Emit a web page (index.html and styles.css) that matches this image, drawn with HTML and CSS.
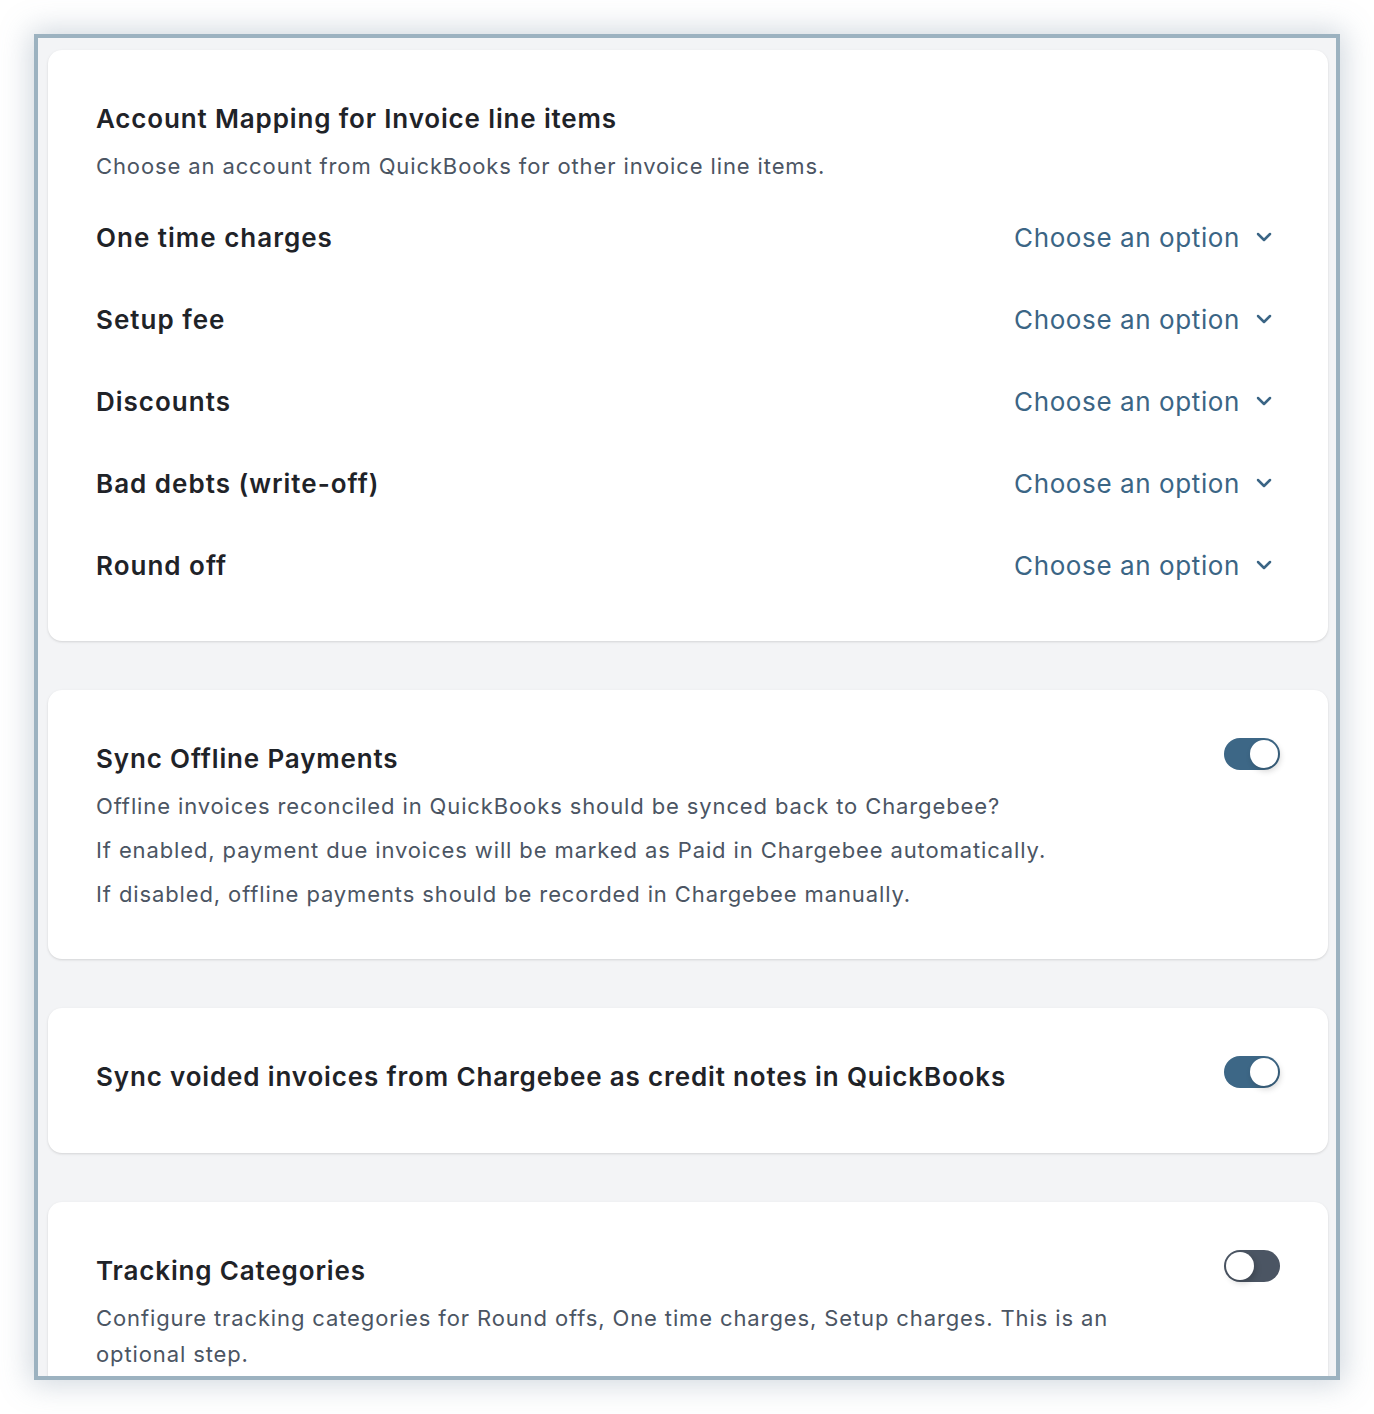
FILE: index.html
```html
<html>
<head>
<title>QuickBooks sync settings</title>
<link rel="stylesheet" href="styles.css">
</head>
<body>
<div class="frame">
<div class="stack">

<div class="card card-mapping">
<h2 class="card-title">Account Mapping for Invoice line items</h2>
<p class="card-desc">Choose an account from QuickBooks for other invoice line items.</p>
<div class="map-list">
<div class="map-row"><span class="map-label">One time charges</span><span class="select">Choose an option <svg class="chev" viewBox="0 0 16 16"><path d="M2 5l6 6 6-6"/></svg></span></div>
<div class="map-row"><span class="map-label">Setup fee</span><span class="select">Choose an option <svg class="chev" viewBox="0 0 16 16"><path d="M2 5l6 6 6-6"/></svg></span></div>
<div class="map-row"><span class="map-label">Discounts</span><span class="select">Choose an option <svg class="chev" viewBox="0 0 16 16"><path d="M2 5l6 6 6-6"/></svg></span></div>
<div class="map-row"><span class="map-label">Bad debts (write-off)</span><span class="select">Choose an option <svg class="chev" viewBox="0 0 16 16"><path d="M2 5l6 6 6-6"/></svg></span></div>
<div class="map-row"><span class="map-label">Round off</span><span class="select">Choose an option <svg class="chev" viewBox="0 0 16 16"><path d="M2 5l6 6 6-6"/></svg></span></div>
</div>
</div>

<div class="card">
<div class="card-head">
<h2 class="card-title">Sync Offline Payments</h2>
<span class="toggle on"><span class="knob"></span></span>
</div>
<p class="card-desc">Offline invoices reconciled in QuickBooks should be synced back to Chargebee?</p>
<p class="card-desc">If enabled, payment due invoices will be marked as Paid in Chargebee automatically.</p>
<p class="card-desc">If disabled, offline payments should be recorded in Chargebee manually.</p>
</div>

<div class="card card-single">
<div class="card-head">
<h2 class="card-title">Sync voided invoices from Chargebee as credit notes in QuickBooks</h2>
<span class="toggle on"><span class="knob"></span></span>
</div>
</div>

<div class="card">
<div class="card-head">
<h2 class="card-title">Tracking Categories</h2>
<span class="toggle"><span class="knob"></span></span>
</div>
<p class="card-desc card-desc-wrap">Configure tracking categories for Round offs, One time charges, Setup charges. This is an optional step.</p>
</div>

</div>
</div>
</body>
</html>
```

FILE: styles.css
```css
body {
margin:0;
background-color:#fff;
font-family:"Inter", "Roboto", "Liberation Sans", sans-serif;
}
.frame {
margin:34px 0 0 34px;
width:1298px;
height:1338px;
border:4px solid #9cb2c0;
background-color:#f3f4f6;
overflow:hidden;
box-shadow:0 0 28px 4px rgba(120,140,160,0.35);
}
.stack {
display:flex;
flex-direction:column;
gap:49px;
padding:12px 8px 0 10px;
}
.card {
background-color:#fff;
border-radius:14px;
padding:48px 48px 47px 48px;
box-shadow:0 1px 3px rgba(0,0,0,0.10), 0 1px 2px rgba(0,0,0,0.04);
}
.card-mapping {
padding-bottom:35px;
}
.card-single {
padding-bottom:55px;
}
.card-head {
display:flex;
justify-content:space-between;
align-items:flex-start;
}
.card-title {
margin:0;
font-size:26px;
line-height:42px;
font-weight:600;
letter-spacing:0.85px;
color:#1f2328;
}
.card-desc {
margin:8px 0 0 0;
font-size:22px;
line-height:36px;
letter-spacing:0.88px;
color:#4b5563;
}
.card-desc-wrap {
max-width:1060px;
}
.map-list {
margin-top:12px;
}
.map-row {
display:flex;
justify-content:space-between;
align-items:center;
height:82px;
}
.map-label {
font-size:26px;
font-weight:600;
letter-spacing:1px;
color:#1f2328;
}
.select {
display:flex;
align-items:center;
gap:16px;
padding-right:8px;
font-size:26px;
letter-spacing:0.6px;
color:#3b6585;
}
.chev {
width:16px;
height:16px;
fill:none;
stroke:#3b6585;
stroke-width:2.5;
stroke-linecap:round;
stroke-linejoin:round;
}
.toggle {
position:relative;
flex:none;
width:56px;
height:32px;
border-radius:16px;
background-color:#4b5563;
}
.toggle.on {
background-color:#3d6786;
}
.knob {
position:absolute;
top:2px;
left:2px;
width:28px;
height:28px;
border-radius:50%;
background-color:#fff;
box-shadow:2px 3px 6px rgba(0,0,0,0.18);
}
.toggle.on .knob {
left:26px;
}
```
